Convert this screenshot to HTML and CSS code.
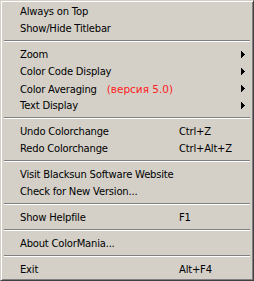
FILE: index.html
```html
<!DOCTYPE html>
<html lang="ru">

<head>
    <meta charset="UTF-8">
    <meta name="viewport" content="width=device-width, initial-scale=1.0">
    <title>ColorMania menu</title>
    <link rel="stylesheet" href="styles.css">
</head>

<body>
    <div class="menu">
        <div class="item"><span class="label">Always on Top</span></div>
        <div class="item"><span class="label">Show/Hide Titlebar</span></div>
        <div class="sep"></div>
        <div class="item"><span class="label">Zoom</span><span class="key"></span><svg class="arrow" width="4" height="7"><path d="M0 0h1v7h-1z M1 1h1v5h-1z M2 2h1v3h-1z M3 3h1v1h-1z" /></svg></div>
        <div class="item"><span class="label">Color Code Display</span><span class="key"></span><svg class="arrow" width="4" height="7"><path d="M0 0h1v7h-1z M1 1h1v5h-1z M2 2h1v3h-1z M3 3h1v1h-1z" /></svg></div>
        <div class="item"><span class="label">Color Averaging <span class="red">(версия 5.0)</span></span><span class="key"></span><svg class="arrow" width="4" height="7"><path d="M0 0h1v7h-1z M1 1h1v5h-1z M2 2h1v3h-1z M3 3h1v1h-1z" /></svg></div>
        <div class="item"><span class="label">Text Display</span><span class="key"></span><svg class="arrow" width="4" height="7"><path d="M0 0h1v7h-1z M1 1h1v5h-1z M2 2h1v3h-1z M3 3h1v1h-1z" /></svg></div>
        <div class="sep"></div>
        <div class="item"><span class="label">Undo Colorchange</span><span class="key">Ctrl+Z</span></div>
        <div class="item"><span class="label">Redo Colorchange</span><span class="key">Ctrl+Alt+Z</span></div>
        <div class="sep"></div>
        <div class="item"><span class="label">Visit Blacksun Software Website</span></div>
        <div class="item"><span class="label">Check for New Version...</span></div>
        <div class="sep"></div>
        <div class="item"><span class="label">Show Helpfile</span><span class="key">F1</span></div>
        <div class="sep"></div>
        <div class="item"><span class="label">About ColorMania...</span></div>
        <div class="sep"></div>
        <div class="item"><span class="label">Exit</span><span class="key">Alt+F4</span></div>
    </div>
</body>

</html>
```
FILE: styles.css
```css
body {
    margin: 0;
    background-color: #d4d0c8;
}

.menu {
    width: 254px;
    height: 281px;
    box-sizing: border-box;
    padding: 2px;
    background-color: #d4d0c8;
    border: 1px solid;
    border-color: #d4d0c8 #404040 #404040 #d4d0c8;
    box-shadow: inset 1px 1px #ffffff, inset -1px -1px #808080;
    font-family: "DejaVu Sans", sans-serif;
    font-size: 10px;
    letter-spacing: -0.2px;
    color: #000000;
}

.item {
    display: flex;
    align-items: center;
    height: 17px;
    padding-left: 17px;
    padding-right: 6px;
    white-space: nowrap;
}

.label {
    width: 159px;
}

.key {
    flex: 1;
}

.red {
    color: #ff2020;
    margin-left: 7px;
    font-size: 10.5px;
    letter-spacing: 0;
}

.arrow {
    display: block;
    fill: #000000;
}

.sep {
    height: 0;
    margin: 3px 1px 4px;
    border-top: 1px solid #808080;
    border-bottom: 1px solid #ffffff;
}
```
